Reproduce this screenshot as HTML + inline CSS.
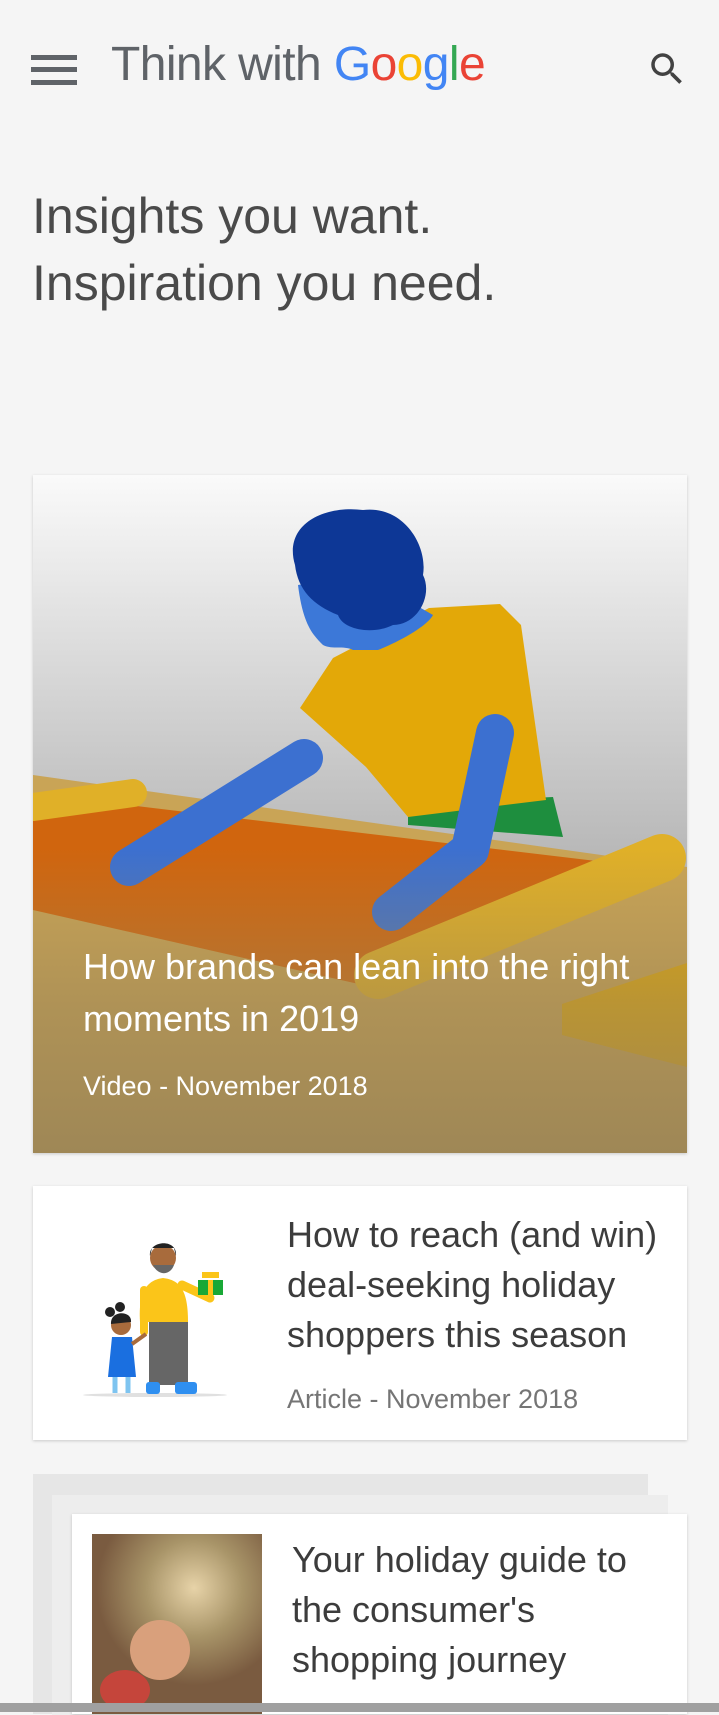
<!DOCTYPE html>
<html><head><meta charset="utf-8">
<style>
*{margin:0;padding:0;box-sizing:border-box}
html,body{width:719px;height:1712px;overflow:hidden;background:#f5f5f5;font-family:"Liberation Sans",sans-serif}
.a{position:absolute}
.card{position:absolute;background:#fff;box-shadow:0 1px 3px rgba(0,0,0,.18)}
.t{position:absolute;white-space:nowrap}
</style></head><body>
<div class="a" style="left:31px;top:55px;width:46px;height:5px;background:#5f6368"></div>
<div class="a" style="left:31px;top:67px;width:46px;height:5px;background:#5f6368"></div>
<div class="a" style="left:31px;top:80px;width:46px;height:5px;background:#5f6368"></div>
<div class="t" style="left:111px;top:37px;font-size:48px;line-height:56px;letter-spacing:-0.6px;color:#5f6368">Think with <span style="color:#4285f4">G</span><span style="color:#ea4335">o</span><span style="color:#fbbc05">o</span><span style="color:#4285f4">g</span><span style="color:#34a853">l</span><span style="color:#ea4335">e</span></div>
<svg class="a" style="left:646px;top:48px" width="42" height="42" viewBox="0 0 24 24"><path fill="#424242" d="M15.5 14h-.79l-.28-.27A6.470 6.470 0 0 0 16 9.5 6.5 6.5 0 1 0 9.5 16c1.61 0 3.090-.59 4.230-1.57l.27.28v.79l5 4.99L20.490 19l-4.990-5zm-6 0C7.010 14 5 11.990 5 9.500S7.010 5 9.500 5 14 7.010 14 9.500 11.990 14 9.500 14z"/></svg>
<div class="t" style="left:32px;top:183px;font-size:50px;line-height:67px;color:#4a4a4a">Insights you want.<br>Inspiration you need.</div>

<div class="card" style="left:33px;top:475px;width:654px;height:678px;overflow:hidden">
<svg width="654" height="678" viewBox="0 0 654 678" style="position:absolute;left:0;top:0">
<defs>
<linearGradient id="bg" x1="0" y1="0" x2="0" y2="1"><stop offset="0" stop-color="#fafafa"/><stop offset="0.55" stop-color="#b9b9b9"/></linearGradient>
<linearGradient id="ov" x1="0" y1="0" x2="0" y2="1"><stop offset="0.55" stop-color="#9a8456" stop-opacity="0"/><stop offset="0.78" stop-color="#9a8456" stop-opacity="0.55"/><stop offset="1" stop-color="#9a8456" stop-opacity="0.9"/></linearGradient>
</defs>
<rect width="654" height="678" fill="url(#bg)"/>
<polygon points="0,300 654,392 654,678 0,678" fill="#c9a456"/>
<polygon points="0,340 95,330 580,388 330,510 0,435" fill="#d0650e"/>
<line x1="0" y1="332" x2="100" y2="318" stroke="#e0b028" stroke-width="28" stroke-linecap="round"/>
<polygon points="375,329 520,322 530,362 375,350" fill="#1e8e3e"/>
<polygon points="267,233 300,183 396,133 467,129 488,150 513,325 375,342 333,292" fill="#e3a808"/>
<path d="M265,110 C270,150 280,160 290,170 C300,175 310,170 320,175 L345,175 C370,165 395,150 400,140 L330,100 Z" fill="#3c78d8"/>
<path d="M262,90 C250,50 290,30 330,35 C370,30 395,70 390,100 C400,120 385,150 360,150 C340,160 310,155 305,140 C280,130 265,115 262,90 Z" fill="#0d3796"/>
<polyline points="271,283 96,392" fill="none" stroke="#3c70d0" stroke-width="38" stroke-linecap="round"/>
<polyline points="462,258 437,375 358,437" fill="none" stroke="#3c70d0" stroke-width="38" stroke-linecap="round" stroke-linejoin="round"/>
<line x1="629" y1="383" x2="345" y2="500" stroke="#e0b028" stroke-width="48" stroke-linecap="round"/>
<polygon points="529,529 654,488 654,592 529,560" fill="#e0a80a"/>
<rect width="654" height="678" fill="url(#ov)"/>
</svg>
<div class="t" style="left:50px;top:466px;font-size:36px;line-height:52px;color:#fff">How brands can lean into the right<br>moments in 2019</div>
<div class="t" style="left:50px;top:596px;font-size:27px;color:#fff">Video - November 2018</div>
</div>

<div class="card" style="left:33px;top:1186px;width:654px;height:254px"></div>
<svg class="a" style="left:60px;top:1210px" width="200" height="200" viewBox="0 0 200 200">
<ellipse cx="95" cy="185" rx="72" ry="2" fill="#e0e0e0"/>
<rect x="89" y="110" width="39" height="65" fill="#666"/>
<rect x="86" y="172" width="14" height="12" rx="3" fill="#2f8ff0"/>
<rect x="115" y="172" width="22" height="12" rx="3" fill="#2f8ff0"/>
<path d="M80,112 C78,80 88,70 103,68 C120,70 128,80 128,112 Z" fill="#fbc519"/>
<line x1="122" y1="75" x2="150" y2="88" stroke="#fbc519" stroke-width="9" stroke-linecap="round"/>
<line x1="84" y1="80" x2="84" y2="122" stroke="#fbc519" stroke-width="8" stroke-linecap="round"/>
<rect x="138" y="70" width="25" height="15" fill="#18a836"/>
<rect x="148" y="70" width="5" height="15" fill="#fbc519"/>
<rect x="142" y="62" width="17" height="6" fill="#fbc519"/>
<circle cx="103" cy="48" r="13" fill="#a86b3c"/>
<path d="M90,46 C88,30 118,28 116,46 L114,38 L92,38 Z" fill="#222"/>
<path d="M93,55 C98,66 110,66 114,55 Z" fill="#666"/>
<line x1="55" y1="165" x2="55" y2="183" stroke="#7ec4f0" stroke-width="5"/>
<line x1="68" y1="165" x2="68" y2="183" stroke="#7ec4f0" stroke-width="5"/>
<path d="M52,127 L72,127 L76,167 L48,167 Z" fill="#1a6fe0"/>
<line x1="72" y1="134" x2="86" y2="124" stroke="#a86b3c" stroke-width="4"/>
<circle cx="61" cy="115" r="10" fill="#a86b3c"/>
<path d="M51,114 C50,100 72,100 71,112 Z" fill="#222"/>
<circle cx="50" cy="102" r="5" fill="#222"/><circle cx="60" cy="97" r="5" fill="#222"/>
</svg>
<div class="t" style="left:287px;top:1210px;font-size:36px;line-height:50px;color:#3c3c3c">How to reach (and win)<br>deal-seeking holiday<br>shoppers this season</div>
<div class="t" style="left:287px;top:1384px;font-size:27px;color:#757575">Article - November 2018</div>

<div class="a" style="left:33px;top:1474px;width:615px;height:240px;background:#e6e6e6"></div>
<div class="a" style="left:52px;top:1495px;width:616px;height:220px;background:#ededed"></div>
<div class="card" style="left:72px;top:1514px;width:615px;height:200px"></div>
<div class="a" style="left:92px;top:1534px;width:170px;height:180px;background:radial-gradient(circle at 60% 30%,#e7d3a8 0,#a89468 30%,#7a5b40 60%),#8a6a4a"></div>
<div class="a" style="left:130px;top:1620px;width:60px;height:60px;border-radius:50%;background:#d9a07c"></div>
<div class="a" style="left:100px;top:1670px;width:50px;height:40px;border-radius:50%;background:#d8403a;opacity:.8"></div>
<div class="t" style="left:292px;top:1535px;font-size:36px;line-height:50px;color:#3c3c3c">Your holiday guide to<br>the consumer's<br>shopping journey</div>
<div class="a" style="left:0;top:1703px;width:719px;height:9px;background:#a0a0a0"></div>
</body></html>
